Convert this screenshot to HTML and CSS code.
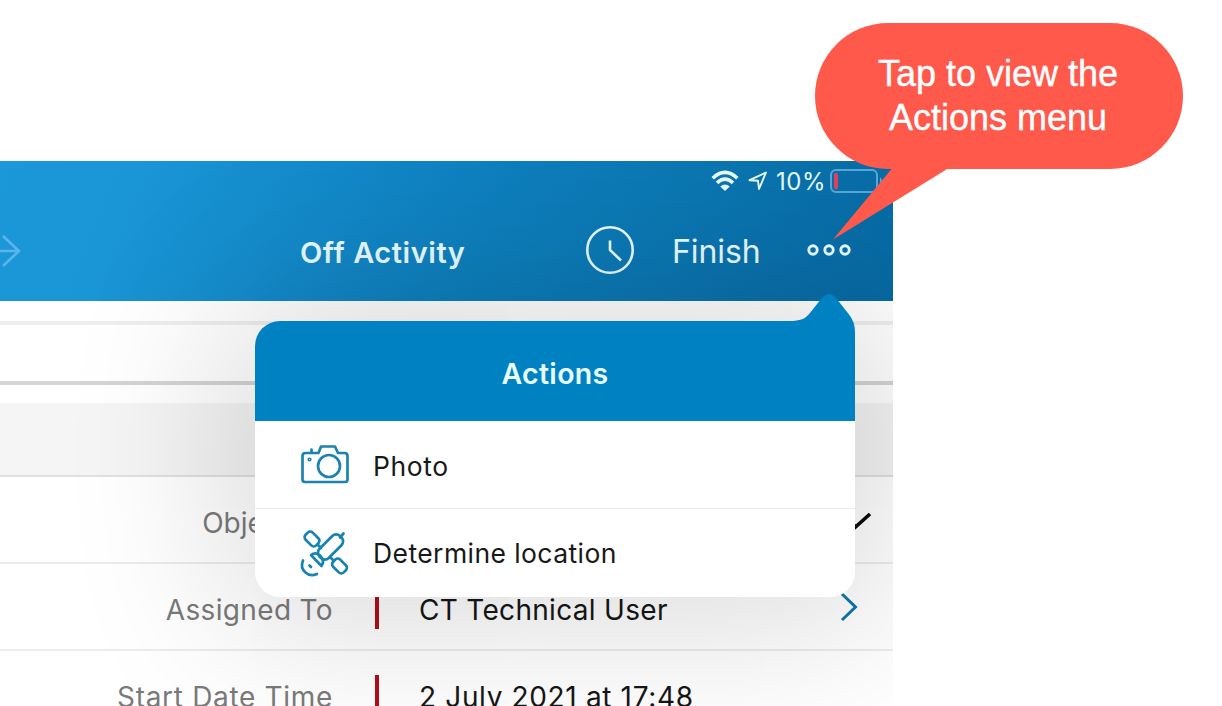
FILE: index.html
```
<!DOCTYPE html>
<html lang="en">
<head>
<meta charset="utf-8">
<title>Off Activity</title>
<link rel="stylesheet" href="styles.css">
</head>
<body>
<main class="stage">
  <section class="tablet">
    <header class="header">
      <div class="status">
        <svg class="wifi" width="28" height="22" viewBox="0 0 28 22" fill="none" stroke="#e9fbff" stroke-width="3.6"><path d="M1.7 8.2Q14-3.3 26.3 8.2M6 12.9Q14 5.4 22 12.9"/><path d="M9.2 16.4Q14 12.6 18.8 16.4L14 21Z" fill="#e9fbff" stroke="none"/></svg>
        <svg class="locate" width="20" height="20" viewBox="0 0 20 20" fill="none" stroke="#e9fbff" stroke-width="1.9" stroke-linejoin="round"><path d="M18 1.5L1.5 9.2L10 9.8L11 18Z"/></svg>
        <span class="percent">10%</span>
        <svg class="battery" width="56" height="24" viewBox="0 0 56 24"><rect x="1" y="1" width="46" height="22" rx="5" fill="none" stroke="#5aa6d6" stroke-width="2"/><rect x="4" y="4" width="4" height="16" rx="1.5" fill="#e73e5b"/><path d="M50 8Q54 12 50 16Z" fill="#5aa6d6"/></svg>
      </div>
      <nav class="nav">
        <svg class="forward" width="22" height="34" viewBox="0 0 22 34" fill="none" stroke="#5bb4ea" stroke-width="2.6"><path d="M0 17H19M3 2L19 17L3 32"/></svg>
        <h1 class="title">Off Activity</h1>
        <svg class="clock" width="50" height="50" viewBox="0 0 50 50" fill="none" stroke="#e6faff" stroke-width="2.6"><circle cx="25" cy="25" r="22.7"/><path d="M25 15.5V25L36 35.5"/></svg>
        <span class="finish">Finish</span>
        <svg class="more" width="46" height="14" viewBox="0 0 46 14" fill="none" stroke="#e6faff" stroke-width="2.9"><circle cx="7" cy="7" r="4.2"/><circle cx="23" cy="7" r="4.2"/><circle cx="39" cy="7" r="4.2"/></svg>
      </nav>
    </header>
    <div class="tabs"></div>
    <div class="group"></div>
    <div class="row"><span class="label object">Object</span>
      <svg class="check" width="26" height="20" viewBox="0 0 26 20" fill="none" stroke="#0c0c0c" stroke-width="3.6"><path d="M2 9L8.500 16L23 3"/></svg>
    </div>
    <div class="row"><span class="label assigned">Assigned To</span><i class="required"></i><span class="value user">CT Technical User</span>
      <svg class="chevron" width="18" height="30" viewBox="0 0 18 30" fill="none" stroke="#0c78ad" stroke-width="3"><path d="M2 2L15.500 15L2 28"/></svg>
    </div>
    <div class="row"><span class="label start">Start Date Time</span><i class="required"></i><span class="value date">2 July 2021 at 17:48</span></div>
    <aside class="popover">
      <h2 class="popover-title"><span class="heading">Actions</span></h2>
      <svg class="pointer" width="66" height="53" viewBox="0 0 66 53"><path d="M0 27C12 27 16 25 21 19L32 5Q40-4 47 4L60 20.500Q66 28 66 38V53H0Z" fill="#0081c1"/></svg>
      <div class="action">
        <svg width="50" height="50" viewBox="0 0 50 50" fill="none" stroke="#1c83ae" stroke-width="2.7" stroke-linejoin="round" stroke-linecap="round"><path d="M5.500 13H18.500L21 6.500H35L38 13H44.500Q47.500 13 47.500 16V39.500Q47.500 42 45 42H5Q2.500 42 2.500 39.500V16Q2.500 13 5.500 13ZM11.500 9.500V13"/><circle cx="29" cy="26" r="11"/><circle cx="9.500" cy="19.500" r="1.300" stroke-width="1.600"/></svg>
        <span class="photo">Photo</span>
      </div>
      <div class="action last">
        <svg width="50" height="50" viewBox="0 0 50 50" fill="none" stroke="#1683b0" stroke-width="2.700" stroke-linecap="round" stroke-linejoin="round"><rect x="-7.500" y="-5" width="15" height="10" rx="3.500" transform="translate(12 11) rotate(45)"/><rect x="-7.500" y="-5" width="15" height="10" rx="3.500" transform="translate(39.500 38) rotate(45)"/><path d="M17.500 16.500L21 20M30.500 29.500L34 33"/><rect x="-14.500" y="-6.500" width="29" height="13" rx="5.500" transform="translate(30.500 19) rotate(-45)"/><path d="M40 9.500L43.500 5.500M11 27Q16 23.500 20.500 28Q25 33 21.500 38ZM3 32.500Q0 40 5.500 44.500Q10.500 49 17 46M9.500 37.500L11 39"/></svg>
        <span class="location">Determine location</span>
      </div>
    </aside>
  </section>
  <div class="callout">
    <svg class="tail" width="116" height="74" viewBox="0 0 116 74"><path d="M61 0L0 73.500L115 2.500V0Z" fill="#ff594c"/></svg>
    <p class="callout-text">Tap to view the<br>Actions menu</p>
  </div>
</main>
</body>
</html>
```
FILE: styles.css
```
* { box-sizing: border-box; }
body { margin: 0; background: #fff; font-family: Inter, sans-serif; }
h1, h2, p { margin: 0; font-weight: inherit; }
svg { display: block; flex: none; overflow: visible; }
.stage { position: relative; width: 1222px; height: 706px; padding-top: 161px; overflow: hidden; }
.tablet { position: relative; width: 893px; height: 545px; overflow: hidden; white-space: nowrap; }
.header { height: 140px; background: linear-gradient(112deg, #1b98d8 0%, #1a95d5 15%, #1389c9 36%, #0d7ebc 55%, #0b76b1 75%, #0769a2 100%); color: #e6faff; }
.status { display: flex; align-items: center; height: 40px; padding-left: 711px; }
.locate { margin-left: 9px; }
.percent { width: 50px; margin: 0 4px 0 8px; font-size: 24px; letter-spacing: .5px; }
.nav { display: flex; align-items: center; height: 99px; }
.title { width: 167px; margin-left: 278px; padding-top: 4px; font-size: 29px; font-weight: 600; letter-spacing: .55px; }
.clock { margin: 0 0 2px 118px; }
.finish { width: 88px; margin-left: 37px; padding-top: 2px; font-size: 32px; letter-spacing: -.1px; }
.more { margin: 0 0 2px 46px; }
.tabs { height: 102px; padding: 20px 0 18px; }
.tabs::before { content: ""; display: block; height: 56px; border-top: 4px solid #eee; border-bottom: 4px solid #d4d4d4; }
.group { height: 74px; background: #f5f5f5; border-bottom: 2px solid #e0e0e0; }
.row { display: flex; align-items: center; height: 87px; padding-top: 6px; border-bottom: 2px solid #ececec; font-size: 28px; }
.row:last-of-type { height: 88px; }
.label { flex: none; width: 333px; text-align: right; color: #7a7a7a; }
.object { padding-right: 44px; }
.assigned { letter-spacing: .35px; }
.start { letter-spacing: .68px; }
.required { flex: none; width: 4px; height: 44px; margin-left: 42px; background: #b40d18; }
.assigned ~ .required { margin-bottom: 6px; }
.value { margin-left: 40px; color: #161616; }
.user { width: 248px; letter-spacing: .3px; }
.date { letter-spacing: .65px; }
.check { margin: 0 0 4px 514px; }
.chevron { margin: 0 0 5px 173px; }
.popover { position: absolute; left: 255px; top: 160px; width: 600px; height: 276px; border-radius: 25px; background: #fff; box-shadow: 0 0 160px 30px rgba(0,0,0,.15); }
.pointer { position: absolute; right: 0; top: -27px; }
.popover-title { display: flex; align-items: center; justify-content: center; height: 100px; padding-top: 4px; border-radius: 25px 25px 0 0; background: #0081c1; color: #e8fbff; font-size: 28.5px; font-weight: 600; letter-spacing: .3px; }
.action { display: flex; align-items: center; gap: 23px; height: 88px; padding-left: 45px; border-bottom: 1px solid #ececec; color: #181818; font-size: 26.5px; letter-spacing: .42px; }
.photo { padding-top: 2px; letter-spacing: .6px; }
.last { border: 0; }
.callout { position: absolute; left: 815px; top: 23px; width: 368px; height: 145.5px; padding-top: 29px; border-radius: 73px; background: #ff594c; color: #fff; text-align: center; }
.tail { position: absolute; left: 18px; top: 143px; }
.callout-text { position: relative; left: -1px; font: 36px/44px "Liberation Sans", sans-serif; -webkit-text-stroke: .4px #fff; }
```
